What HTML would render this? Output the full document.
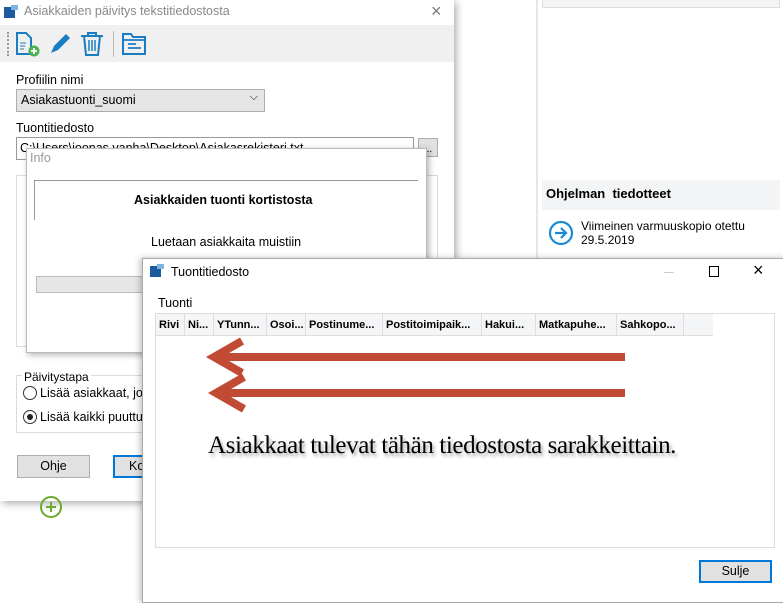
<!DOCTYPE html>
<html><head><meta charset="utf-8"><style>
*{box-sizing:border-box;margin:0;padding:0}
body{width:783px;height:597px;position:relative;overflow:hidden;background:#fff;font-family:"Liberation Sans",sans-serif;font-size:12px;color:#000}
.a{position:absolute}
.hdr{position:absolute;top:0;height:22px;line-height:22px;font-weight:bold;font-size:11px;padding-left:3px;border-right:1px solid #ddd;white-space:nowrap;overflow:hidden}
</style></head><body>
<div class="a" style="left:536px;top:0;width:2px;height:597px;background:#e6e6e6"></div>
<div class="a" style="left:542px;top:0;width:238px;height:8px;background:#f3f4f6;border:1px solid #ddd;border-top:none"></div>
<div class="a" style="left:542px;top:180px;width:238px;height:30px;background:#f3f4f6"></div>
<div class="a" style="left:546px;top:186px;font-weight:bold;font-size:13px">Ohjelman&nbsp; tiedotteet</div>
<svg class="a" style="left:548px;top:220px" width="26" height="26"><circle cx="13" cy="13" r="11" fill="none" stroke="#1a8ad4" stroke-width="2.2"/><path d="M7 13h11M13 8l5 5-5 5" fill="none" stroke="#1a8ad4" stroke-width="2.2"/></svg>
<div class="a" style="left:581px;top:219px;font-size:12px;line-height:14px">Viimeinen varmuuskopio otettu<br>29.5.2019</div>

<div class="a" style="left:0;top:0;width:454px;height:501px;background:#fff;box-shadow:2px 2px 8px rgba(0,0,0,.35)"></div>
<svg class="a" style="left:4px;top:5px" width="14" height="14"><rect x="0" y="2" width="11" height="11" fill="#1e5a9e"/><rect x="7" y="0" width="7" height="5" fill="#7fb2e5"/></svg>
<div class="a" style="left:24px;top:4px;color:#888;font-size:12.5px">Asiakkaiden päivitys tekstitiedostosta</div>
<div class="a" style="left:431px;top:1px;color:#777;font-size:18px">×</div>
<div class="a" style="left:0;top:25px;width:454px;height:37px;background:#f0f0f0"></div>
<div class="a" style="left:7px;top:32px;width:2px;height:24px;border-left:2px dotted #999"></div>
<svg class="a" style="left:15px;top:31px" width="26" height="26"><path d="M2 2h9l5 5v16H2z" fill="none" stroke="#1a7dc4" stroke-width="2"/><path d="M5 12h6M5 15h5M5 18h4" stroke="#1a7dc4"/><circle cx="19" cy="20" r="5.5" fill="#4caf50"/><path d="M19 17v6M16 20h6" stroke="#fff" stroke-width="1.8"/></svg>
<svg class="a" style="left:48px;top:32px" width="24" height="24"><path d="M3 21l3-7 12-12 4 4-12 12z" fill="#1a7dc4"/></svg>
<svg class="a" style="left:79px;top:31px" width="26" height="26"><path d="M2 5h22M9 5V2h8v3M5 5l2 19h12l2-19" fill="none" stroke="#1a7dc4" stroke-width="2"/><path d="M10 9v11M13 9v11M16 9v11" stroke="#1a7dc4" stroke-width="1.5"/></svg>
<div class="a" style="left:113px;top:31px;width:1px;height:26px;background:#bbb"></div>
<svg class="a" style="left:121px;top:32px" width="26" height="24"><path d="M2 2h8l2 3h12v17H2z" fill="none" stroke="#1a7dc4" stroke-width="2"/><path d="M2 8h22M7 12h8M7 16h13" stroke="#1a7dc4" stroke-width="1.8"/></svg>
<div class="a" style="left:16px;top:73px;font-size:12.5px">Profiilin nimi</div>
<div class="a" style="left:16px;top:89px;width:249px;height:23px;background:#e5e5e5;border:1px solid #adadad;padding:3px 4px;font-size:12.5px">Asiakastuonti_suomi<span style="position:absolute;right:6px;top:1px;font-size:11px">⌵</span></div>
<div class="a" style="left:16px;top:121px;font-size:12.5px">Tuontitiedosto</div>
<div class="a" style="left:16px;top:137px;width:398px;height:23px;border:1px solid #999;padding:3px 3px;overflow:hidden;white-space:nowrap;font-size:12.5px">C:\Users\joonas.vanha\Desktop\Asiakasrekisteri.txt</div>
<div class="a" style="left:418px;top:138px;width:20px;height:19px;background:#e1e1e1;border:1px solid #adadad;font-size:10px;text-align:center;line-height:22px">...</div>
<div class="a" style="left:16px;top:175px;width:422px;height:172px;border:1px solid #dcdcdc"></div>
<div class="a" style="left:16px;top:375px;width:140px;height:58px;border:1px solid #dcdcdc"></div>
<div class="a" style="left:22px;top:370px;background:#fff;padding:0 2px;font-size:12px">Päivitystapa</div>
<div class="a" style="left:23px;top:386px;width:14px;height:14px;border:1px solid #333;border-radius:50%"></div>
<div class="a" style="left:40px;top:386px;font-size:12.5px">Lisää asiakkaat, jo</div>
<div class="a" style="left:23px;top:410px;width:14px;height:14px;border:1px solid #333;border-radius:50%"><div style="margin:3px;width:6px;height:6px;border-radius:50%;background:#222"></div></div>
<div class="a" style="left:40px;top:410px;font-size:12.5px">Lisää kaikki puuttu</div>
<div class="a" style="left:17px;top:455px;width:73px;height:23px;background:#e1e1e1;border:1px solid #adadad;text-align:center;line-height:21px;font-size:12.5px">Ohje</div>
<div class="a" style="left:113px;top:455px;width:40px;height:23px;background:#e1e1e1;border:2px solid #0078d7;padding-left:14px;line-height:19px;font-size:12.5px">Ko</div>
<svg class="a" style="left:39px;top:495px" width="24" height="24"><circle cx="12" cy="12" r="10" fill="none" stroke="#6aab2e" stroke-width="2"/><path d="M12 7v10M7 12h10" stroke="#6aab2e" stroke-width="2"/></svg>

<div class="a" style="left:26px;top:148px;width:401px;height:205px;background:#fff;border:1px solid #bbb;box-shadow:2px 2px 6px rgba(0,0,0,.3)"></div>
<div class="a" style="left:30px;top:151px;color:#999;font-size:12.5px">Info</div>
<div class="a" style="left:34px;top:180px;width:384px;height:1px;background:#999"></div>
<div class="a" style="left:34px;top:180px;width:1px;height:40px;background:#999"></div>
<div class="a" style="left:134px;top:193px;font-weight:bold;font-size:12.5px">Asiakkaiden tuonti kortistosta</div>
<div class="a" style="left:151px;top:235px;font-size:12.5px">Luetaan asiakkaita muistiin</div>
<div class="a" style="left:36px;top:276px;width:110px;height:17px;background:#e6e6e6;border:1px solid #bcbcbc"></div>

<div class="a" style="left:142px;top:258px;width:645px;height:345px;background:#fff;border:1px solid #aaa;box-shadow:-2px 0 6px rgba(0,0,0,.25)"></div>
<svg class="a" style="left:150px;top:264px" width="14" height="14"><rect x="0" y="2" width="11" height="11" fill="#1e5a9e"/><rect x="7" y="0" width="7" height="5" fill="#7fb2e5"/></svg>
<div class="a" style="left:171px;top:265px;font-size:12.5px">Tuontitiedosto</div>
<div class="a" style="left:664px;top:272px;width:10px;height:1px;background:#ccc"></div>
<div class="a" style="left:709px;top:266px;width:10px;height:11px;border:1px solid #000"></div>
<div class="a" style="left:753px;top:260px;font-size:18px">×</div>
<div class="a" style="left:158px;top:296px;font-size:12.5px">Tuonti</div>
<div class="a" style="left:155px;top:313px;width:620px;height:235px;border:1px solid #dcdcdc">
<div class="a" style="left:0;top:0;width:557px;height:22px;background:#f4f5f7;border-bottom:1px solid #ddd"></div>
<div class="hdr" style="left:0;width:29px">Rivi</div>
<div class="hdr" style="left:29px;width:29px">Ni...</div>
<div class="hdr" style="left:58px;width:53px">YTunn...</div>
<div class="hdr" style="left:111px;width:39px">Osoi...</div>
<div class="hdr" style="left:150px;width:77px">Postinume...</div>
<div class="hdr" style="left:227px;width:99px">Postitoimipaik...</div>
<div class="hdr" style="left:326px;width:54px">Hakui...</div>
<div class="hdr" style="left:380px;width:81px">Matkapuhe...</div>
<div class="hdr" style="left:461px;width:67px">Sahkopo...</div>
</div>
<svg class="a" style="left:200px;top:335px" width="430" height="80"><g fill="none" stroke="#c14a35" stroke-width="8"><path d="M14 22H425M42 6L14 22l28 16"/><path d="M16 58H425M44 42L16 58l28 16"/></g></svg>
<div class="a" style="left:208px;top:432px;font-family:'Liberation Serif',serif;font-size:25px;letter-spacing:-0.4px;text-shadow:2px 3px 3px rgba(0,0,0,.35)">Asiakkaat tulevat tähän tiedostosta sarakkeittain.</div>
<div class="a" style="left:699px;top:560px;width:73px;height:23px;background:#e1e1e1;border:2px solid #0078d7;text-align:center;line-height:19px;font-size:12.5px">Sulje</div>
</body></html>
